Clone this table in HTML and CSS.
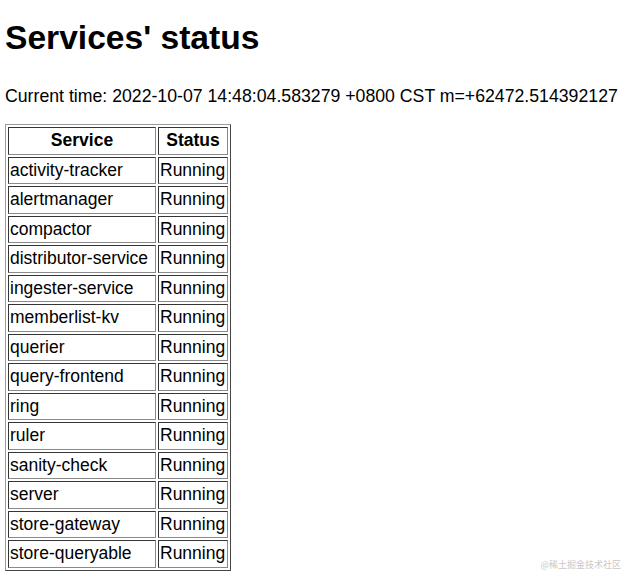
FILE: index.html
```html
<!DOCTYPE html>
<html lang="en">
<head>
<meta charset="utf-8">
<title>Services' status</title>
<link rel="stylesheet" href="styles.css">
</head>
<body>
<h1 class="title">Services' status</h1>
<p class="time">Current time: 2022-10-07 14:48:04.583279 +0800 CST m=+62472.514392127</p>
<table class="status-table">
  <thead>
    <tr><th class="col-service">Service</th><th class="col-status">Status</th></tr>
  </thead>
  <tbody>
    <tr><td>activity-tracker</td><td>Running</td></tr>
    <tr><td>alertmanager</td><td>Running</td></tr>
    <tr><td>compactor</td><td>Running</td></tr>
    <tr><td>distributor-service</td><td>Running</td></tr>
    <tr><td>ingester-service</td><td>Running</td></tr>
    <tr><td>memberlist-kv</td><td>Running</td></tr>
    <tr><td>querier</td><td>Running</td></tr>
    <tr><td>query-frontend</td><td>Running</td></tr>
    <tr><td>ring</td><td>Running</td></tr>
    <tr><td>ruler</td><td>Running</td></tr>
    <tr><td>sanity-check</td><td>Running</td></tr>
    <tr><td>server</td><td>Running</td></tr>
    <tr><td>store-gateway</td><td>Running</td></tr>
    <tr><td>store-queryable</td><td>Running</td></tr>
  </tbody>
</table>
<div class="watermark">@稀土掘金技术社区</div>
</body>
</html>
```
FILE: styles.css
```css
html, body {
  background: #fff;
}
body {
  margin: 5px;
  font-family: "Liberation Sans", Arial, "Noto Sans CJK SC", sans-serif;
  color: #000;
  position: relative;
  min-height: 574px;
}
.title {
  font-size: 33.6px;
  line-height: 40px;
  font-weight: bold;
  margin: 13px 0 0 0;
}
.time {
  font-size: 17.7px;
  line-height: 20px;
  margin: 28px 0 0 0;
}
.status-table {
  margin-top: 18px;
  border: 1px outset #9a9a9a;
  border-spacing: 2px;
  font-size: 17.5px;
}
.status-table th,
.status-table td {
  border: 1px inset #8a8a8a;
  padding: 1px 1px;
  line-height: 23.5px;
  text-align: left;
}
.status-table th {
  text-align: center;
  font-weight: bold;
}
.col-service {
  width: 144px;
}
.col-status {
  width: 66px;
}
.watermark {
  position: absolute;
  right: 14px;
  bottom: 8px;
  font-family: "Noto Sans CJK SC", sans-serif;
  font-size: 9px;
  color: #c8c8c8;
}
```
